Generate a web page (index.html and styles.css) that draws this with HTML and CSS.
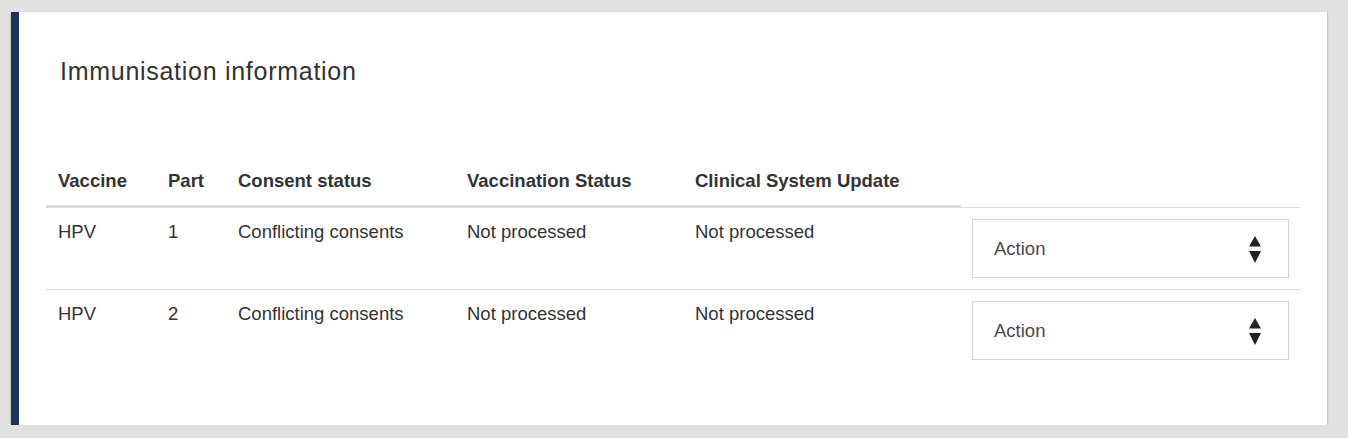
FILE: index.html
```html
<!DOCTYPE html>
<html lang="en">
<head>
    <meta charset="UTF-8">
    <meta name="viewport" content="width=device-width, initial-scale=1.0">
    <title>Immunisation information</title>
    <link rel="stylesheet" href="styles.css">
</head>
<body>
    <div class="card">
        <h2 class="card-title">Immunisation information</h2>

        <table class="imm-table">
            <colgroup>
                <col class="col-vaccine">
                <col class="col-part">
                <col class="col-consent">
                <col class="col-vacc">
                <col class="col-clinical">
                <col class="col-action">
            </colgroup>
            <thead>
                <tr>
                    <th>Vaccine</th>
                    <th>Part</th>
                    <th>Consent status</th>
                    <th>Vaccination Status</th>
                    <th>Clinical System Update</th>
                    <th class="th-action"></th>
                </tr>
            </thead>
            <tbody>
                <tr>
                    <td>HPV</td>
                    <td>1</td>
                    <td>Conflicting consents</td>
                    <td>Not processed</td>
                    <td>Not processed</td>
                    <td class="td-action">
                        <div class="action-select">
                            <span>Action</span>
                            <svg class="select-arrows" width="12" height="27" viewBox="0 0 12 27">
                                <path d="M6 0 L12 10.5 L0 10.5 Z" fill="#222"/>
                                <path d="M0 15 L12 15 L6 27 Z" fill="#222"/>
                            </svg>
                        </div>
                    </td>
                </tr>
                <tr>
                    <td>HPV</td>
                    <td>2</td>
                    <td>Conflicting consents</td>
                    <td>Not processed</td>
                    <td>Not processed</td>
                    <td class="td-action">
                        <div class="action-select">
                            <span>Action</span>
                            <svg class="select-arrows" width="12" height="27" viewBox="0 0 12 27">
                                <path d="M6 0 L12 10.5 L0 10.5 Z" fill="#222"/>
                                <path d="M0 15 L12 15 L6 27 Z" fill="#222"/>
                            </svg>
                        </div>
                    </td>
                </tr>
            </tbody>
        </table>
    </div>
</body>
</html>
```

FILE: styles.css
```css
* {
    margin: 0;
    padding: 0;
    box-sizing: border-box;
}

body {
    font-family: "Liberation Sans", Arial, sans-serif;
    background: #e1e1e1;
    color: #333;
    padding: 12px 0 0 11px;
}

.card {
    width: 1316px;
    background: #fff;
    border-left: 8px solid #1e3357;
    box-shadow: 0 1px 2px rgba(0, 0, 0, 0.35);
    padding: 44px 27px 54px 27px;
}

.card-title {
    font-size: 25px;
    font-weight: normal;
    line-height: 30px;
    letter-spacing: 0.72px;
    padding-left: 14px;
    margin-bottom: 71px;
    color: #333;
}

.imm-table {
    width: 100%;
    table-layout: fixed;
    border-collapse: separate;
    border-spacing: 0;
    font-size: 18.5px;
    line-height: 22px;
}

.col-vaccine { width: 110px; }
.col-part { width: 70px; }
.col-consent { width: 229px; }
.col-vacc { width: 228px; }
.col-clinical { width: 278px; }
.col-action { width: 339px; }

.imm-table th {
    text-align: left;
    font-weight: bold;
    padding: 13px 12px;
    border-bottom: 3px solid #dcdcdc;
    white-space: nowrap;
}

.imm-table th.th-action {
    border-bottom: 1px solid #dcdcdc;
}

.imm-table td {
    vertical-align: top;
    padding: 13px 12px;
    white-space: nowrap;
}

.imm-table tbody tr:not(:last-child) td {
    border-bottom: 1px solid #dcdcdc;
}

.imm-table td.td-action {
    padding: 11px;
}

.action-select {
    height: 59px;
    border: 1px solid #d4d4d4;
    display: flex;
    align-items: center;
    justify-content: space-between;
    padding: 0 27px 0 21px;
    color: #4a4a4a;
}

.select-arrows {
    display: block;
    margin-top: 2px;
}
```
